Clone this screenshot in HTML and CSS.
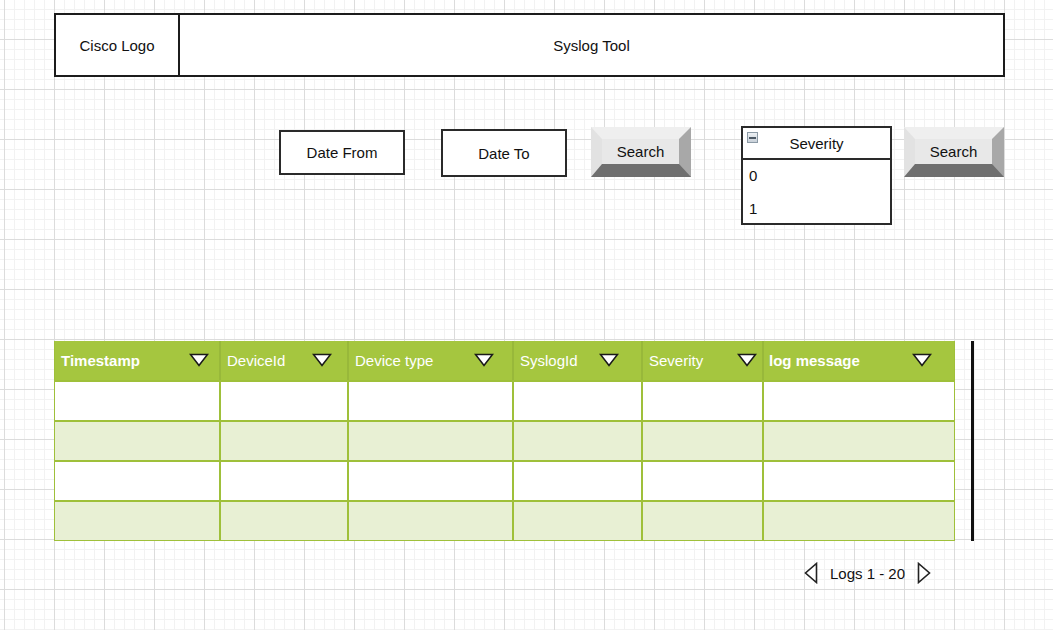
FILE: index.html
```html
<!DOCTYPE html>
<html>
<head>
<meta charset="utf-8">
<title>Syslog Tool</title>
<link rel="stylesheet" href="styles.css">
</head>
<body>
<div class="page">
  <div class="header">
    <div class="logo">Cisco Logo</div>
    <div class="title">Syslog Tool</div>
  </div>

  <div class="controls">
    <div class="field date-from">Date From</div>
    <div class="field date-to">Date To</div>
    <div class="btn search-1"><span>Search</span></div>
    <div class="severity">
      <div class="sev-head">
        <span class="collapse"><span class="minus"></span></span>
        <span>Severity</span>
      </div>
      <div class="sev-item">0</div>
      <div class="sev-item">1</div>
    </div>
    <div class="btn search-2"><span>Search</span></div>
  </div>

  <div class="table-area">
    <div class="table">
      <div class="row head">
        <div class="cell c1"><span class="bold">Timestamp</span><svg class="tri" width="20" height="14" viewBox="0 0 20 14"><polygon points="1.5,1.5 18.5,1.5 10,12.5" fill="#fff" stroke="#1a1a1a" stroke-width="1.6"/></svg></div>
        <div class="cell c2"><span>DeviceId</span><svg class="tri" width="20" height="14" viewBox="0 0 20 14"><polygon points="1.5,1.5 18.5,1.5 10,12.5" fill="#fff" stroke="#1a1a1a" stroke-width="1.6"/></svg></div>
        <div class="cell c3"><span>Device type</span><svg class="tri" width="20" height="14" viewBox="0 0 20 14"><polygon points="1.5,1.5 18.5,1.5 10,12.5" fill="#fff" stroke="#1a1a1a" stroke-width="1.6"/></svg></div>
        <div class="cell c4"><span>SyslogId</span><svg class="tri" width="20" height="14" viewBox="0 0 20 14"><polygon points="1.5,1.5 18.5,1.5 10,12.5" fill="#fff" stroke="#1a1a1a" stroke-width="1.6"/></svg></div>
        <div class="cell c5"><span>Severity</span><svg class="tri" width="20" height="14" viewBox="0 0 20 14"><polygon points="1.5,1.5 18.5,1.5 10,12.5" fill="#fff" stroke="#1a1a1a" stroke-width="1.6"/></svg></div>
        <div class="cell c6"><span class="bold">log message</span><svg class="tri" width="20" height="14" viewBox="0 0 20 14"><polygon points="1.5,1.5 18.5,1.5 10,12.5" fill="#fff" stroke="#1a1a1a" stroke-width="1.6"/></svg></div>
      </div>
      <div class="row body odd"><div class="cell c1"></div><div class="cell c2"></div><div class="cell c3"></div><div class="cell c4"></div><div class="cell c5"></div><div class="cell c6"></div></div>
      <div class="row body even"><div class="cell c1"></div><div class="cell c2"></div><div class="cell c3"></div><div class="cell c4"></div><div class="cell c5"></div><div class="cell c6"></div></div>
      <div class="row body odd"><div class="cell c1"></div><div class="cell c2"></div><div class="cell c3"></div><div class="cell c4"></div><div class="cell c5"></div><div class="cell c6"></div></div>
      <div class="row body even"><div class="cell c1"></div><div class="cell c2"></div><div class="cell c3"></div><div class="cell c4"></div><div class="cell c5"></div><div class="cell c6"></div></div>
    </div>
    <div class="vline"></div>
  </div>

  <div class="pager">
    <svg class="arrow" width="14" height="22" viewBox="0 0 14 22"><polygon points="12.5,1.5 12.5,20.5 1.5,11" fill="#fff" stroke="#222" stroke-width="1.6"/></svg>
    <span class="pager-text">Logs 1 - 20</span>
    <svg class="arrow" width="14" height="22" viewBox="0 0 14 22"><polygon points="1.5,1.5 1.5,20.5 12.5,11" fill="#fff" stroke="#222" stroke-width="1.6"/></svg>
  </div>
</div>
</body>
</html>
```

FILE: styles.css
```css
* { box-sizing: border-box; }

html, body {
  margin: 0;
  padding: 0;
  width: 1053px;
  height: 630px;
  overflow: hidden;
}

body {
  font-family: "Liberation Sans", Arial, sans-serif;
  font-size: 15px;
  color: #111;
  background-color: #ffffff;
  background-image:
    linear-gradient(to right, #dcdcdc 1px, transparent 1px),
    linear-gradient(to bottom, #dcdcdc 1px, transparent 1px),
    linear-gradient(to right, #f2f2f2 1px, transparent 1px),
    linear-gradient(to bottom, #f2f2f2 1px, transparent 1px);
  background-size: 50px 50px, 50px 50px, 10px 10px, 10px 10px;
  background-position: 4px 0, 0 39px, 4px 0, 0 9px;
}

.page {
  padding: 13px 0 0 54px;
}

/* Header */
.header {
  display: flex;
  width: 951px;
  height: 64px;
  border: 2px solid #1c1c1c;
  background: #fff;
}
.logo {
  width: 124px;
  border-right: 2px solid #1c1c1c;
  display: flex;
  align-items: center;
  justify-content: center;
}
.title {
  flex: 1;
  display: flex;
  align-items: center;
  justify-content: center;
}

/* Controls row */
.controls {
  display: flex;
  align-items: flex-start;
  margin-top: 49px;
}
.field {
  background: #fff;
  border: 2px solid #2a2a2a;
  display: flex;
  align-items: center;
  justify-content: center;
}
.date-from {
  margin-left: 225px;
  margin-top: 4px;
  width: 126px;
  height: 45px;
}
.date-to {
  margin-left: 36px;
  margin-top: 3px;
  width: 126px;
  height: 48px;
}

.btn {
  width: 100px;
  height: 50px;
  border-style: solid;
  border-width: 12px 12px 13px 11px;
  border-color: #efefef #a8a8a8 #6f6f6f #e2e2e2;
  background: #e8e8e8;
  display: flex;
  align-items: center;
  justify-content: center;
  color: #111;
}
.btn span { margin-top: -1px; }
.search-1 {
  margin-left: 24px;
  margin-top: 1px;
}
.search-2 {
  margin-left: 12px;
  margin-top: 1px;
}

.severity {
  margin-left: 50px;
  width: 151px;
  height: 99px;
  border: 2px solid #2a2a2a;
  background: #fff;
  display: flex;
  flex-direction: column;
}
.sev-head {
  height: 33px;
  border-bottom: 2px solid #2a2a2a;
  display: flex;
  align-items: center;
  justify-content: center;
  position: relative;
}
.collapse {
  position: absolute;
  left: 4px;
  top: 4px;
  width: 11px;
  height: 11px;
  border: 1px solid #8c9aa6;
  background: linear-gradient(#eef1f4, #c8d0d8);
  display: flex;
  align-items: center;
  justify-content: center;
}
.minus {
  width: 7px;
  height: 2px;
  background: #4c5864;
}
.sev-item {
  height: 32px;
  padding-left: 6px;
  display: flex;
  align-items: center;
}
.sev-item:first-of-type { padding-bottom: 2px; }
.sev-item:last-child { padding-top: 2px; }

/* Table */
.table-area {
  display: flex;
  align-items: stretch;
  margin-top: 116px;
}
.table {
  width: 901px;
  border: 1.5px solid #9fc03a;
  border-top: none;
}
.row {
  display: flex;
}
.row.head {
  height: 39px;
  background: #a5c63f;
  color: #fff;
}
.row.body {
  height: 40px;
  border-top: 2px solid #9fc03a;
}
.row.odd { background: #ffffff; }
.row.even { background: #e8f0d4; }

.cell {
  border-left: 2px solid #9fc03a;
  display: flex;
  align-items: center;
  justify-content: space-between;
}
.row.head .cell {
  border-left-color: #98b83a;
  padding-left: 6px;
}
.cell.c1 { width: 164px; border-left: none; }
.cell.c2 { width: 128px; }
.cell.c3 { width: 165px; }
.cell.c4 { width: 129px; }
.cell.c5 { width: 121px; }
.cell.c6 { flex: 1; }
.row.head .cell.c1 { padding-left: 6px; padding-right: 10px; }
.row.head .cell.c2 { padding-right: 15px; }
.row.head .cell.c3 { padding-right: 18px; }
.row.head .cell.c4 { padding-right: 22px; }
.row.head .cell.c5 { padding-right: 5px; }
.row.head .cell.c6 { padding-left: 5px; padding-right: 22px; }
.bold { font-weight: bold; }
.tri { display: block; margin-top: -1px; }

.vline {
  width: 3px;
  margin-left: 16px;
  background: #111;
}

/* Pager */
.pager {
  display: flex;
  align-items: center;
  margin-top: 21px;
  margin-left: 750px;
}
.arrow { display: block; }
.pager-text {
  margin: 0 12px 0 12px;
}
```
